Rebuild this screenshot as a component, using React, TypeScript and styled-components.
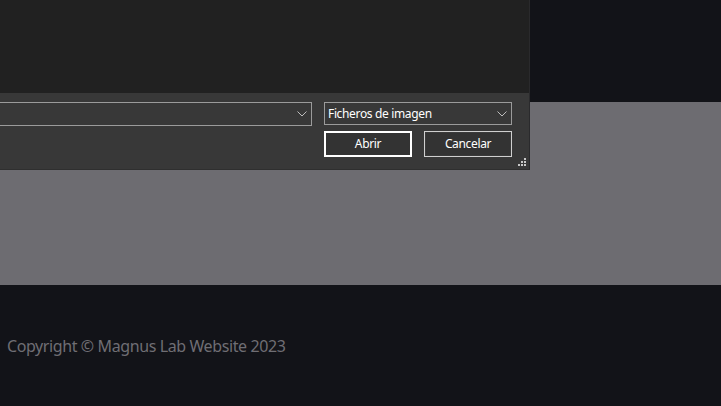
import React from "react";
import styled, { createGlobalStyle } from "styled-components";

const Global = createGlobalStyle`
  html, body { margin: 0; padding: 0; background: #121318; }
  body { font-family: "Noto Sans", "Open Sans", sans-serif; overflow: hidden; }
  #root { position: relative; width: 721px; height: 406px; }
`;

const Page = styled.div`
  width: 721px;
  height: 406px;
  background: #121318;
  display: flex;
  flex-direction: column;
`;

const TopSpace = styled.div`
  height: 102px;
`;

const Band = styled.section`
  height: 183px;
  background: #6d6c71;
`;

const Footer = styled.footer`
  padding: 49px 0 0 7px;
  font-size: 16px;
  letter-spacing: -0.4px;
  line-height: 24px;
  color: #6f6e74;
`;

const Dialog = styled.div`
  position: absolute;
  left: 0;
  top: 0;
  width: 529px;
  height: 169px;
  display: flex;
  flex-direction: column;
  border-right: 1px solid #2a2a2c;
  border-bottom: 1px solid #2f2f2f;
  font-family: "Noto Sans", "Open Sans", sans-serif;
  font-size: 12px;
  letter-spacing: -0.35px;
`;

const ListArea = styled.div`
  height: 93px;
  background: #212121;
`;

const Controls = styled.div`
  flex: 1;
  background: #383838;
  position: relative;
  display: grid;
  grid-template-columns: 312px 188px;
  column-gap: 12px;
  row-gap: 5px;
  padding: 9px 0 0 0;
  align-content: start;
`;

const Combo = styled.div<{ $h: number; $bleed?: boolean }>`
  height: ${(p) => p.$h}px;
  box-sizing: border-box;
  border: 1px solid #9b9b9b;
  display: flex;
  align-items: center;
  justify-content: space-between;
  padding: 0 4px 1px 3px;
  margin-left: ${(p) => (p.$bleed ? "-2px" : "0")};
  color: #ffffff;
  align-self: start;
  svg { display: block; margin-top: 1px; }
`;

const Chevron = () => (
  <svg width="10" height="6" viewBox="0 0 10 6">
    <path d="M0.5 0.5 L5 5 L9.5 0.5" fill="none" stroke="#bdbdbd" strokeWidth="1" />
  </svg>
);

const Buttons = styled.div`
  grid-column: 2;
  display: flex;
  gap: 12px;
`;

const Button = styled.button<{ $primary?: boolean }>`
  width: 88px;
  height: 26px;
  box-sizing: border-box;
  background: #333333;
  color: #ffffff;
  font-family: "Noto Sans", "Open Sans", sans-serif;
  font-size: 12px;
  letter-spacing: -0.35px;
  padding: 0 0 2px 0;
  border: ${(p) => (p.$primary ? "2px solid #ffffff" : "1px solid #d0d0d0")};
  box-shadow: ${(p) => (p.$primary ? "none" : "inset 0 0 0 1px #3a3a3a")};
`;

const Grip = styled.div`
  position: absolute;
  right: 3px;
  bottom: 3px;
  width: 8px;
  height: 8px;
  svg { display: block; }
`;

const GripIcon = () => (
  <svg width="8" height="8" viewBox="0 0 8 8">
    {[
      [6, 0],
      [3, 3],
      [6, 3],
      [0, 6],
      [3, 6],
      [6, 6],
    ].map(([x, y]) => (
      <rect key={`${x}-${y}`} x={x} y={y} width="2" height="2" fill="#c8c8c8" />
    ))}
  </svg>
);

export default function App() {
  return (
    <>
      <Global />
      <Page>
        <TopSpace />
        <Band />
        <Footer>Copyright © Magnus Lab Website 2023</Footer>
      </Page>
      <Dialog>
        <ListArea />
        <Controls>
          <Combo $h={24} $bleed>
            <span />
            <Chevron />
          </Combo>
          <Combo $h={23}>
            <span>Ficheros de imagen</span>
            <Chevron />
          </Combo>
          <Buttons>
            <Button $primary>Abrir</Button>
            <Button>Cancelar</Button>
          </Buttons>
          <Grip>
            <GripIcon />
          </Grip>
        </Controls>
      </Dialog>
    </>
  );
}
